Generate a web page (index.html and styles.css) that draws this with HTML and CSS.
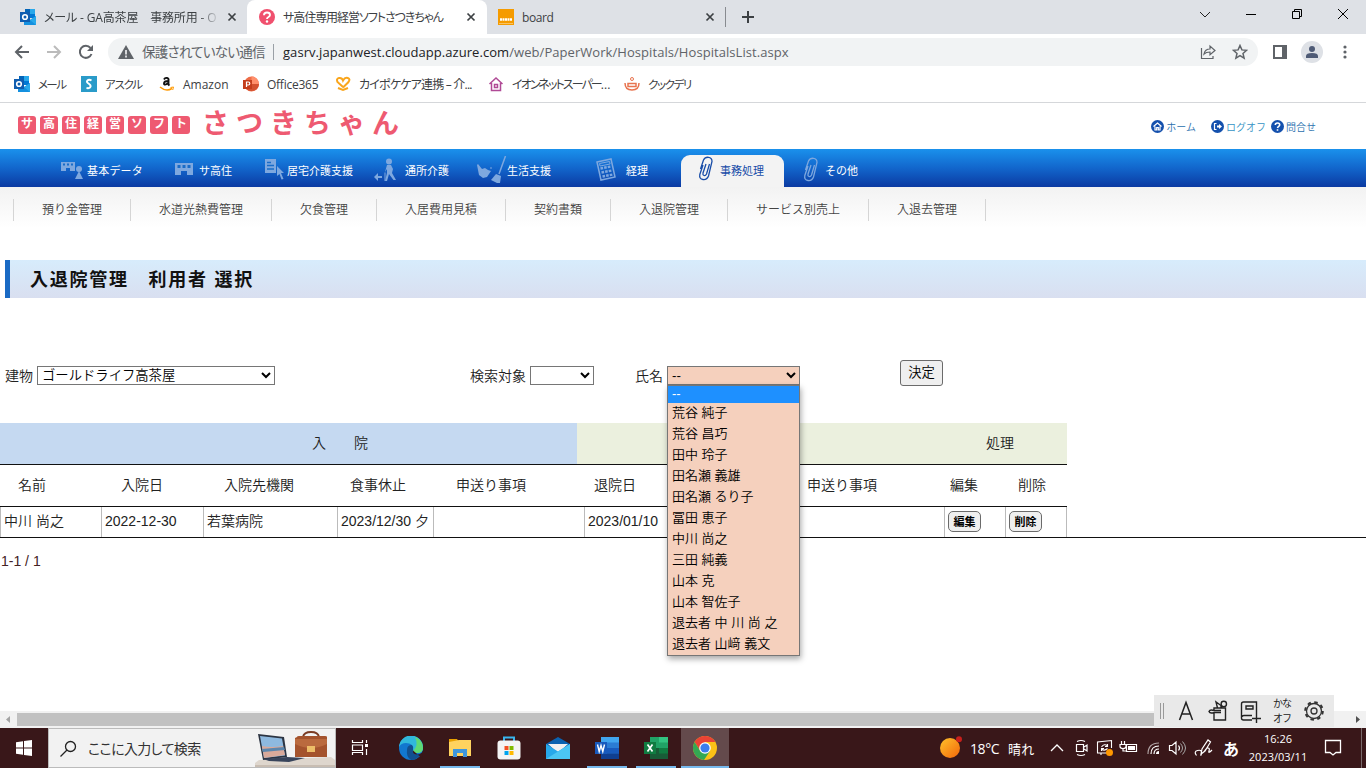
FILE: index.html
```html
<!doctype html>
<html lang="ja">
<head>
    <meta charset="UTF-8">
    <title>サ高住専用経営ソフトさつきちゃん</title>
    <link rel="stylesheet" href="styles.css">
</head>
<body>
<!-- icons used more than once -->
<svg class="defs">
    <symbol id="outlook" viewBox="0 0 16 16">
        <path d="M5 0h10v9H5z" fill="#28a8ea"/><path d="M5 0h5v5H5z" fill="#0364b8"/><path d="M10 5h5v4h-5z" fill="#0078d4"/>
        <path d="M4 8l6 3 6-4v9H4z" fill="#1490df"/><path d="M10 11l6-4v9z" fill="#28a8ea"/>
        <path d="M0 3h10v10H0z" fill="#0f5db0"/><circle cx="5" cy="8" r="2.300" fill="none" stroke="#fff" stroke-width="1.600"/>
    </symbol>
    <symbol id="close" viewBox="0 0 10 10"><path d="M1.500 1.500l7 7m0-7l-7 7" stroke="#3c4043" stroke-width="1.700"/></symbol>
    <symbol id="clip" viewBox="0 0 16 25">
        <path d="M2.500 13L5.500 4Q7 1 10.500 1.300T14 5.500L10.500 20Q9 24 5 23.500T1.800 18.500L5 9M11.500 8L8.500 18Q7.500 20 6 19.500T5 17L8 8" fill="none" stroke="currentColor" stroke-width="1.300"/>
    </symbol>
</svg>

<div class="tabs">
    <div class="tab tab1">
        <svg class="ico"><use href="#outlook"/></svg>
        <span class="name fade">メール - GA高茶屋　事務所用 - O</span>
        <svg class="x"><use href="#close"/></svg>
    </div>
    <div class="tab tab2 on">
        <svg class="ico" viewBox="0 0 16 16"><circle cx="8" cy="8" r="8" fill="#f0506e"/><path d="M5 6.200Q5 3.500 8 3.500T11 6q0 1.200-1.500 2T8 10" fill="none" stroke="#fff" stroke-width="1.900"/><circle cx="8" cy="12.500" r="1.200" fill="#fff"/></svg>
        <span class="name">サ高住専用経営ソフトさつきちゃん</span>
        <svg class="x"><use href="#close"/></svg>
    </div>
    <div class="tab tab3">
        <svg class="ico" viewBox="0 0 16 16"><path d="M0 0h16v16H0z" fill="#f59b00"/><path d="M2 10.500h12" stroke="#fff" stroke-width="2.500" stroke-dasharray="2 .5"/><path d="M1 14.500h14" stroke="#fbd48c" stroke-width=".7"/></svg>
        <span class="name">board</span>
        <svg class="x"><use href="#close"/></svg>
    </div>
    <svg class="plus" viewBox="0 0 12 12"><path d="M6 0v12M0 6h12" stroke="#3c4043" stroke-width="2"/></svg>
    <div class="win">
        <svg viewBox="0 0 46 28"><path d="M18 12l5 5 5-5" fill="none" stroke="#222"/></svg>
        <svg viewBox="0 0 46 28"><path d="M18 14.500h10" stroke="#000"/></svg>
        <svg viewBox="0 0 46 28"><path d="M18.500 11.500h7v7h-7zM20.500 11v-1.500h7v7H26" fill="none" stroke="#000"/></svg>
        <svg viewBox="0 0 46 28"><path d="M18 9l10 10m0-10L18 19" stroke="#000"/></svg>
    </div>
</div>

<div class="toolbar">
    <div class="arrows">
        <svg viewBox="0 0 16 16"><path d="M15 8H2m6-6L2 8l6 6" fill="none" stroke="#5f6368" stroke-width="2"/></svg>
        <svg viewBox="0 0 16 16"><path d="M1 8h13M8 2l6 6-6 6" fill="none" stroke="#bbb" stroke-width="2"/></svg>
        <svg viewBox="0 0 16 16"><path d="M13.500 10A6 6 0 1 1 12.500 4" fill="none" stroke="#5f6368" stroke-width="2"/><path d="M15 1v6H9z" fill="#5f6368"/></svg>
    </div>
    <div class="omnibox">
        <svg class="warn" viewBox="0 0 16 14"><path d="M8 0l8 14H0z" fill="#5f6368"/><path d="M8 5v4.500m0 1v2" stroke="#fff" stroke-width="1.500"/></svg>
        <span class="insecure">保護されていない通信</span>
        <i class="bar"></i>
        <span class="url"><b>gasrv.japanwest.cloudapp.azure.com</b>/web/PaperWork/Hospitals/HospitalsList.aspx</span>
        <svg class="share" viewBox="0 0 16 16"><path d="M1.500 4v10.500H13V12" fill="none" stroke="#5f6368" stroke-width="1.200"/><path d="M4 10q1-5 6-5V2l5 4.500-5 4.300V8Q6 8 4 10z" fill="none" stroke="#5f6368" stroke-width="1.200"/></svg>
        <svg class="star" viewBox="0 0 16 16"><path d="M8 1.500l1.900 4.400 4.700.4-3.600 3.100 1.100 4.700L8 11.600l-4.100 2.500L5 9.400 1.400 6.300l4.700-.4z" fill="none" stroke="#5f6368" stroke-width="1.500"/></svg>
    </div>
    <svg class="side" viewBox="0 0 14 14"><path d="M1 1h12v12H1z" fill="#fff" stroke="#5f6368" stroke-width="2"/><path d="M9 1h4v12H9z" fill="#5f6368"/></svg>
    <svg class="user" viewBox="0 0 22 22"><circle cx="11" cy="11" r="11" fill="#dee1e6"/><circle cx="11" cy="8" r="3" fill="#4f5b76"/><path d="M5 17v-2q0-3 6-3t6 3v2z" fill="#4f5b76"/></svg>
    <svg class="dots" viewBox="0 0 4 14"><g fill="#5f6368"><circle cx="2" cy="2" r="1.600"/><circle cx="2" cy="7" r="1.600"/><circle cx="2" cy="12" r="1.600"/></g></svg>
</div>

<div class="bookmarks">
    <div><svg><use href="#outlook"/></svg><span class="mail">メール</span></div>
    <div><svg viewBox="0 0 16 16"><path d="M0 0h16v16H0z" fill="#2a9bc9"/><path d="M10.500 4.500Q8 3 6.500 4.500t1 3 2 3.300T5.500 12" fill="none" stroke="#fff" stroke-width="2"/></svg><span class="askul">アスクル</span></div>
    <div><svg viewBox="0 0 16 16"><path d="M1 11q6 5 12 1.500" fill="none" stroke="#f90" stroke-width="1.500"/><path d="M11.500 11.500l3-.5-.8 3" fill="none" stroke="#f90"/><path d="M5 3.500Q6 1.500 8 2t1.500 2v4.500l1 1M9.500 5Q5 5 5 7.500T9.500 7" fill="none" stroke="#111" stroke-width="1.900"/></svg><span>Amazon</span></div>
    <div><svg viewBox="0 0 16 16"><circle cx="8.500" cy="8" r="7.500" fill="#ed6c47"/><path d="M8.500.5a7.500 7.500 0 0 1 7.500 7.500H8.500z" fill="#ff8f6b"/><path d="M1.200 8H16a7.500 7.500 0 0 1-14.500 2z" fill="#d35230"/><path d="M0 4h9v9H0z" fill="#c43e1c"/><path d="M3.500 11V6h1.800q1.500 0 1.500 1.500T5.300 9H3.500" fill="none" stroke="#fff" stroke-width="1.200"/></svg><span class="office">Office365</span></div>
    <div><svg viewBox="0 0 16 16"><path d="M8 11L2.500 6Q1 2.500 4 2t4 2.500Q10 1 12.800 2t.7 4L8 11.500M3 12l5 2 5-2" fill="none" stroke="#f9a51b" stroke-width="2"/></svg><span class="kp">カイポケケア連携 – 介...</span></div>
    <div><svg viewBox="0 0 16 16"><path d="M1.500 8L8 2l6.500 6M3.500 7v7.500h9V7M6.500 8.500h3v3h-3z" fill="none" stroke="#b04a96" stroke-width="1.500"/></svg><span><span class="aeon">イオンネットスーパー</span>...</span></div>
    <div><svg viewBox="0 0 16 16"><g fill="none" stroke="#e8744f"><circle cx="8" cy="3" r="1.500"/><path d="M1 7q0 7 7 7t7-7" stroke-width="1.500"/><path d="M4 7.500h8v3H4z" stroke-width="1.500"/></g></svg><span class="cook">クックデリ</span></div>
</div>

<div class="page">
    <div class="header">
        <div class="logo">
            <i>サ</i><i>高</i><i>住</i><i>経</i><i>営</i><i>ソ</i><i>フ</i><i>ト</i>
            <strong>さつきちゃん</strong>
        </div>
        <div class="links">
            <a class="home"><svg viewBox="0 0 13 13"><circle cx="6.500" cy="6.500" r="6.500" fill="#1450ad"/><path d="M2.500 6.500l4-3.500 4 3.500M4 6.500V10h1.700V7.500h1.600V10H9V6.500" fill="none" stroke="#fff" stroke-width="1.200"/></svg>ホーム</a>
            <a class="logoff"><svg viewBox="0 0 13 13"><circle cx="6.500" cy="6.500" r="6.500" fill="#1450ad"/><path d="M5.500 3.500H3.500v6h2" fill="none" stroke="#fff" stroke-width="1.200"/><path d="M6 5.500h2V4l3 2.500L8 9V7.500H6z" fill="#fff"/></svg>ログオフ</a>
            <a><svg viewBox="0 0 13 13"><circle cx="6.500" cy="6.500" r="6.500" fill="#1450ad"/><path d="M4.300 5q0-2 2.200-2t2.200 1.800q0 .8-1 1.500T6.500 8M6.500 9.200v1.600" fill="none" stroke="#fff" stroke-width="1.600"/></svg>問合せ</a>
        </div>
    </div>

    <div class="nav">
        <div class="n1"><svg viewBox="0 0 24 25"><path d="M0 5h14v9H9v-3H5v3H0z"/><path d="M2 7.500h10" stroke="#196cc8" stroke-width="2" stroke-dasharray="2"/><circle cx="18" cy="12" r="3"/><path d="M18 14l4 8h-8z"/></svg>基本データ</div>
        <div class="n2"><svg viewBox="0 0 24 25"><path d="M0 6h18v12h-6v-4H6v4H0z"/><path d="M2.500 9.500h13" stroke="#196cc8" stroke-width="3" stroke-dasharray="3 2"/></svg>サ高住</div>
        <div class="n3"><svg viewBox="0 0 22 25"><path d="M0 2h11v14H0z"/><path d="M2 5.500h4M2 8.500h7M2 12h7" stroke="#196cc8" stroke-width="1.300"/><path d="M12 9l7 7h-3l2.500 6-2 .5-2-5.500-2.500 2z"/></svg>居宅介護支援</div>
        <div class="n4"><svg viewBox="0 0 24 25"><circle cx="15" cy="4.500" r="3"/><path d="M13 8h4l2 4-1 4 4 7h-2.500L15 17l-2 7h-2l2-8v-4l-2 3z"/><path d="M11 15.500V24" stroke="#7ea8df"/><path d="M0 20l4-4v3h4v2H4v3z"/></svg>通所介護</div>
        <div class="n5"><svg viewBox="0 0 31 28"><path d="M1 9l1-1 4 5 3-1 3 2 3 1-4 6-4 1-4-3-1-5z"/><path d="M29.500 0L23 18" stroke="#7ea8df" stroke-width="1.500"/><path d="M20 18l5 2-1 7h-3l-6-3z"/><path d="M14 12h2" stroke="#7ea8df"/></svg>生活支援</div>
        <div class="n6"><svg viewBox="0 0 24 25"><path d="M1 5l14-3 4 18-14 3z" fill="none" stroke="#7ea8df" stroke-width="1.500"/><path d="M3.500 6.500l10-2 .6 2.500-10 2z" fill="none" stroke="#7ea8df"/><path d="M4.500 11.500l10.500-2M5.500 15.500l10.500-2M6.500 19.500l10.500-2" stroke="#7ea8df" stroke-width="2.500" stroke-dasharray="2.600 1.100"/></svg>経理</div>
        <div class="n7"><svg><use href="#clip"/></svg>事務処理</div>
        <div class="n8"><svg><use href="#clip"/></svg>その他</div>
    </div>

    <div class="subnav">
        <a>預り金管理</a><a>水道光熱費管理</a><a>欠食管理</a><a>入居費用見積</a><a>契約書類</a><a>入退院管理</a><a>サービス別売上</a><a>入退去管理</a>
    </div>

    <h1>入退院管理　利用者 選択</h1>

    <div class="filter">
        <label class="f1"><span>建物</span> <select><option>ゴールドライフ高茶屋</option></select></label>
        <label class="f2"><span>検索対象</span> <select><option></option></select></label>
        <label class="f3"><span>氏名</span>
            <div class="pick">
                <select><option>--</option></select>
                <ul class="list">
                    <li class="cur">--</li>
                    <li>荒谷 純子</li>
                    <li>荒谷 昌巧</li>
                    <li>田中 玲子</li>
                    <li>田名瀬 義雄</li>
                    <li>田名瀬 るり子</li>
                    <li>冨田 恵子</li>
                    <li>中川 尚之</li>
                    <li>三田 純義</li>
                    <li>山本 克</li>
                    <li>山本 智佐子</li>
                    <li>退去者 中 川 尚 之</li>
                    <li>退去者 山﨑 義文</li>
                </ul>
            </div>
        </label>
        <button>決定</button>
    </div>

    <div class="group">
        <div class="in">入　　院</div>
        <div class="out">処理</div>
    </div>
    <div class="head">
        <span>名前</span><span>入院日</span><span>入院先機関</span><span>食事休止</span><span>申送り事項</span><span>退院日</span><span>申送り事項</span><span>編集</span><span>削除</span>
    </div>
    <div class="row">
        <span>中川 尚之</span><span>2022-12-30</span><span>若葉病院</span><span>2023/12/30 夕</span><span></span><span>2023/01/10</span><span></span><span><button>編集</button></span><span><button>削除</button></span><span></span>
    </div>
    <p class="pager">1-1 / 1</p>
</div>

<div class="scroll">
    <svg viewBox="0 0 17 17"><path d="M10 5v7L6 8.500z" fill="#a3a3a3"/></svg>
    <i></i>
    <svg viewBox="0 0 17 17"><path d="M7 5v7l4-3.500z" fill="#505050"/></svg>
</div>

<div class="ime">
    <svg class="grip" viewBox="0 0 16 32"><path d="M6.500 8v16M9.500 8v16" stroke="#999"/></svg>
    <svg viewBox="0 0 32 32"><path d="M9.500 25L16 7.500 22.500 25M12 19h8" fill="none" stroke="#222" stroke-width="1.500"/></svg>
    <svg viewBox="0 0 32 32"><path d="M12 18v7h11.500V13H12v2M12 17.500h7M12 15.500h7M12 15.500q-4-1.500-5 1 1 2.500 5 1M15.500 13L14 7l5 3.500V13M18.500 13l2-2" fill="none" stroke="#222" stroke-width="1.400"/><circle cx="21.800" cy="9" r="2.700" fill="none" stroke="#222" stroke-width="1.400"/></svg>
    <svg viewBox="0 0 32 32"><path d="M22.500 19V7h-13q-2 0-2 2v14q0 2 2 2H18M8 22q0-1.500 2-1.500h8M12 11h7v3h-7zM22.500 19v9m-4.500-4.500h9" fill="none" stroke="#222" stroke-width="1.400"/></svg>
    <span>かな<br>オフ</span>
    <svg viewBox="0 0 32 32"><circle cx="16" cy="16" r="7.500" fill="none" stroke="#333" stroke-width="1.300"/><circle cx="16" cy="16" r="8.800" fill="none" stroke="#333" stroke-width="2" stroke-dasharray="3.455"/><circle cx="16" cy="16" r="3" fill="none" stroke="#333" stroke-width="1.300"/></svg>
</div>

<div class="taskbar">
    <div class="start"><svg viewBox="0 0 16 16"><path d="M0 2.300L7 1.200v6.300H0zM8 1l8-1v7.500H8zM0 8.500h7v6.300l-7-1zM8 8.500h8V16l-8-1z" fill="#fff"/></svg></div>
    <div class="search">
        <svg class="lens" viewBox="0 0 17 17"><circle cx="10.500" cy="6.500" r="5" fill="none" stroke="#222" stroke-width="1.300"/><path d="M7 10l-6.500 6.500" stroke="#222" stroke-width="1.300"/></svg>
        <span>ここに入力して検索</span>
        <svg class="art" viewBox="0 0 80 38"><path d="M4 31l72-3 4 3v7H0v-4z" fill="#ded6cd"/><path d="M0 36h80v2H0z" fill="#c8bdb2"/><path d="M3 5l26 3 3 20-24 3z" fill="#2c3442"/><path d="M5 7l22 2.500 3 17-21 2.500z" fill="#8eb9df"/><path d="M7 17q9 2 21 0l2 9-21 3z" fill="#d9a99a"/><path d="M7 20l22-2 1 3-22 2z" fill="#5b86ad"/><path d="M8 30l24-2 18 1-16 4-20-1z" fill="#38445b"/><path d="M48 8q1-5 8-5t8 5" fill="none" stroke="#7b3b22" stroke-width="2"/><path d="M42 8q0-1 2-1h26q2 0 2 1v20H40V9z" fill="#a4532d"/><path d="M40 10h32v5q-16 8-32 0z" fill="#ba6a3e"/><path d="M52 17h8v6h-8z" fill="#edbd68"/></svg>
    </div>
    <div class="apps">
        <div><svg viewBox="0 0 24 24"><path d="M2.500 4v2.500h10V4M2.500 19v-2.500h10V19M2.500 9h10v5.500h-10zM16.500 4v3m0 6v6" fill="none" stroke="#fff" stroke-width="1.200"/><path d="M15 8h3v3h-3z" fill="#fff"/></svg></div>
        <div><svg viewBox="0 0 24 24"><circle cx="12" cy="12" r="12" fill="#1277cf"/><path d="M0 11A12 12 0 0 1 24 12q0 5-6 5-4 0-4-2 1-8-7-8-5 0-7 4z" fill="#31b8dc"/><path d="M16 1a12 12 0 0 1 8 11q0 5-6 5-4 0-4-2 6-6 2-14z" fill="#5fda74"/><path d="M8 14q0-5 5-5 2 2 1 5 0 5 8 4-4 6-10 6-5-3-4-10z" fill="#12508f"/><path d="M14 14.500Q13 19 20 18.500l3-2v-2l1 3-1 2 1 4-3-3z" fill="#391719"/></svg></div>
        <div class="run"><svg viewBox="0 0 24 24"><path d="M1 3h8l2 3H1z" fill="#e9a100"/><path d="M1 6l10-2h12v16H1z" fill="#ffd35f"/><path d="M5 21v-8h14v8h-4v-4H9v4z" fill="#3f96dc"/></svg></div>
        <div><svg viewBox="0 0 24 24"><path d="M7 6V1.500h10V6" fill="none" stroke="#39b5ee" stroke-width="2"/><rect x=".5" y="4.500" width="23" height="19" rx="3" fill="#f4f4f4"/><path d="M7.500 10h4v4h-4z" fill="#f25022"/><path d="M12.500 10h4v4h-4z" fill="#7fba00"/><path d="M7.500 15h4v4h-4z" fill="#00a4ef"/><path d="M12.500 15h4v4h-4z" fill="#ffb900"/></svg></div>
        <div><svg viewBox="0 0 24 24"><path d="M0 8l12-7 12 7v6H0z" fill="#0b62b0"/><path d="M2 8h20l-10 9z" fill="#f1f1f1"/><path d="M0 8l12 7.500L24 8v15H0z" fill="#27a8ea"/><path d="M24 8v15H0z" fill="#4bc5f3"/></svg></div>
        <div class="run"><svg viewBox="0 0 24 24"><path d="M6 1h18v22H6z" fill="#2b7cd3"/><path d="M6 1h18v5.500H6z" fill="#41a5ee"/><path d="M6 12h18v5.500H6z" fill="#185abd"/><path d="M6 17.500h18V23H6z" fill="#103f91"/><path d="M0 6h12v12H0z" fill="#185abd"/><path d="M2.500 8.500l1.700 7L6 9.500l1.800 6 1.700-7" fill="none" stroke="#fff" stroke-width="1.400"/></svg></div>
        <div class="run"><svg viewBox="0 0 24 24"><path d="M6 1h18v22H6z" fill="#21a366"/><path d="M15 1h9v5.500h-9z" fill="#33c481"/><path d="M6 12h18v11H6z" fill="#185c37"/><path d="M15 12h9v5.500h-9z" fill="#107c41"/><path d="M0 6h12v12H0z" fill="#107c41"/><path d="M3.500 8.500l5 7m0-7l-5 7" stroke="#fff" stroke-width="1.700"/></svg></div>
        <div class="run on"><svg viewBox="0 0 24 24"><circle cx="12" cy="12" r="12" fill="#fbc116"/><path d="M1.600 6A12 12 0 0 1 22.400 6H12L8 16z" fill="#ea4335"/><path d="M1.600 6A12 12 0 0 0 11 24l6-9-9 1z" fill="#34a853"/><circle cx="12" cy="12" r="5.800" fill="#fff"/><circle cx="12" cy="12" r="4.600" fill="#3b7ded"/></svg></div>
    </div>
    <div class="tray">
        <svg viewBox="0 0 24 24"><defs><linearGradient id="sun" x1="0" y1="0" x2="1" y2="1"><stop offset="0" stop-color="#ffc22b"/><stop offset="1" stop-color="#f3660a"/></linearGradient></defs><circle cx="12" cy="12" r="10" fill="url(#sun)"/><circle cx="21" cy="3.300" r="3" fill="#c8201c"/></svg>
        <span class="temp">18°C</span><span class="sky">晴れ</span>
        <svg viewBox="0 0 24 24"><path d="M6 15l6-6 6 6" fill="none" stroke="#fff" stroke-width="1.300"/></svg>
        <svg viewBox="0 0 24 24"><path d="M7.500 8.500h7v7h-7zM15 11l3-2v6l-3-2M8 5.500q4-2 8 0M8 18.500q4 2 8 0" fill="none" stroke="#fff" stroke-width="1.200"/></svg>
        <svg viewBox="0 0 24 24"><path d="M14 17H4.500V6l14-1.500V12M8 17v2M8.500 11q3-4 6-1m0-2v2.500H12M14.500 12.500q-3 3-6 .5m0 2v-2.500H11" fill="none" stroke="#fff" stroke-width="1.100"/><circle cx="16.500" cy="16.500" r="3.500" fill="#ff9800"/></svg>
        <svg viewBox="0 0 24 24"><path d="M9.500 8.500h10v7h-10zM4.500 5v3m3-3v3M3 8.500h6v2q0 2-3 2t-3-2zM6 12v3h3" fill="none" stroke="#fff" stroke-width="1.200"/><path d="M11 10h7v4h-7z" fill="#fff"/></svg>
        <svg viewBox="0 0 24 24"><g fill="none" stroke="#fff" stroke-width="1.200"><path d="M7 18Q7 7 18 7" opacity=".6"/><path d="M10 18q0-8 8-8M13 18q0-5 5-5"/></g><path d="M15 18q0-3 3-3v3z" fill="#fff"/></svg>
        <svg viewBox="0 0 24 24"><path d="M4.500 9.500H7L11 6v12l-4-3.500H4.500zM13.500 9.500q2 2.500 0 5" fill="none" stroke="#fff" stroke-width="1.200"/><path d="M15.500 7.500q4 4.500 0 9M17.500 5.500q6 6.500 0 13" fill="none" stroke="#aaa"/></svg>
        <svg class="pen" viewBox="0 0 24 24"><path d="M9 18l1-5 6-9 2.500 2-5.500 9zM4.500 19.500q-3-4 1-5t4 2-1 3M12 16q2-4 4-4t1 3 3-1" fill="none" stroke="#fff" stroke-width="1.200"/></svg>
        <span class="mode">あ</span>
        <span class="clock">16:26<br>2023/03/11</span>
        <svg class="note" viewBox="0 0 24 24"><path d="M4.500 4.500h15v12H15L12 19l-3-2.500H4.500z" fill="none" stroke="#fff" stroke-width="1.300"/></svg>
    </div>
</div>
</body>
</html>
```
FILE: styles.css
```css
* {
    margin: 0;
    padding: 0;
    box-sizing: border-box;
}

body {
    width: 1366px;
    height: 768px;
    overflow: hidden;
    position: relative;
    display: flex;
    flex-direction: column;
    background: #fff;
    color: #222;
    font: 14px "Liberation Sans", "Noto Sans CJK JP", sans-serif;
    white-space: nowrap;
}

svg {
    display: block;
    flex: none;
}

i {
    font-style: normal;
}

.defs {
    position: absolute;
    width: 0;
    height: 0;
}

/* browser */
.tabs, .toolbar, .bookmarks, .taskbar {
    font-family: "Open Sans", "Noto Sans CJK JP", sans-serif;
    font-feature-settings: "palt";
}

.tabs {
    height: 34px;
    background: #dee1e6;
    display: flex;
    font-size: 12px;
    color: #3c4043;
}

.tab {
    display: flex;
    align-items: center;
    height: 34px;
}

.tab1 {
    width: 247px;
    padding: 0 10px 0 20px;
}

.tab2 {
    width: 240px;
    padding: 0 11px 0 12px;
}

.tab3 {
    width: 239px;
    padding: 0 11px 0 11px;
    position: relative;
}

.tab3::after {
    content: "";
    width: 1px;
    height: 20px;
    background: #888b90;
    position: absolute;
    right: 0;
    top: 7px;
}

.tab.on {
    background: #fff;
    border-radius: 8px 8px 0 0;
}

.tab .ico {
    width: 16px;
    height: 16px;
    margin-right: 8px;
}

.tab .name {
    flex: 1;
}

.tab1 .name {
    letter-spacing: -.15px;
    margin-right: 7px;
}

.tab2 .name {
    letter-spacing: -1.050px;
}

.tab3 .name {
    letter-spacing: -.4px;
}

.fade {
    -webkit-mask-image: linear-gradient(90deg, #000 88%, transparent);
    mask-image: linear-gradient(90deg, #000 88%, transparent);
}

.tab .x {
    width: 10px;
    height: 10px;
}

.plus {
    width: 12px;
    height: 12px;
    margin: 11px 0 0 16px;
}

.win {
    display: flex;
    margin-left: auto;
}

.win svg {
    width: 46px;
    height: 28px;
}

.toolbar {
    height: 35px;
    display: flex;
    align-items: center;
}

.arrows {
    display: flex;
    gap: 16px;
    padding-left: 14px;
    width: 108px;
}

.arrows svg {
    width: 16px;
    height: 16px;
}

.omnibox {
    width: 1150px;
    height: 28px;
    border-radius: 14px;
    background: #f1f3f4;
    display: flex;
    align-items: center;
    padding: 0 10px;
    color: #5f6368;
}

.warn {
    width: 16px;
    height: 14px;
    margin-right: 8px;
}

.insecure {
    width: 122px;
    font-size: 13.500px;
    letter-spacing: -.75px;
    padding-bottom: 2px;
}

.bar {
    width: 1px;
    height: 16px;
    margin: 0 9px 0 9px;
    background: #9aa0a6;
}

.url {
    flex: 1;
    font-size: 13px;
    letter-spacing: .06px;
}

.url b {
    color: #202124;
    font-weight: 400;
}

.share {
    width: 16px;
    height: 16px;
    margin-right: 16px;
}

.star {
    width: 16px;
    height: 16px;
}

.side {
    width: 14px;
    height: 14px;
    margin-left: 15px;
}

.user {
    width: 22px;
    height: 22px;
    margin-left: 14px;
}

.dots {
    width: 4px;
    height: 14px;
    margin-left: 20px;
}

.bookmarks {
    height: 34px;
    border-bottom: 1px solid #d5d7da;
    padding: 0 0 3px 14px;
    display: grid;
    grid-template-columns: 67px 78px 84px 92px 153px 136px 1fr;
    font-size: 12px;
    color: #3c4043;
}

.bookmarks div {
    display: flex;
    align-items: center;
    gap: 8px;
}

.bookmarks svg {
    width: 16px;
    height: 16px;
}

.mail, .askul, .cook {
    font-size: 11.500px;
    letter-spacing: -1.600px;
}

.askul {
    letter-spacing: -1.200px;
}

.cook {
    letter-spacing: -1.400px;
}

.office {
    letter-spacing: -.25px;
}

.kp {
    letter-spacing: -.8px;
}

.aeon {
    letter-spacing: -1.900px;
}

/* page */
.page {
    height: 608px;
    font-weight: 350;
}

.header {
    height: 46px;
    display: flex;
    justify-content: space-between;
    padding: 0 50px 0 18px;
}

.logo {
    display: flex;
    gap: 4px;
    padding-top: 13px;
}

.logo i {
    width: 18px;
    height: 18px;
    border-radius: 3px;
    background: #ee5a71;
    color: #fff;
    font-size: 12px;
    font-weight: bold;
    line-height: 17px;
    text-align: center;
}

.logo strong {
    margin: -7px 0 0 8px;
    font-size: 27px;
    font-weight: 700;
    line-height: 31px;
    letter-spacing: 7px;
    color: #ee5a71;
}

.links {
    display: flex;
    align-items: center;
    height: 46px;
    font-size: 10px;
    color: #2a6fae;
}

.links a {
    display: flex;
    align-items: center;
    gap: 2px;
}

.links svg {
    width: 13px;
    height: 13px;
}

.links .home {
    margin-right: 15px;
}

.links .logoff {
    margin-right: 5px;
    color: #3593c4;
}

.nav {
    height: 38px;
    background: linear-gradient(#1a91ec, #1266cc 50%, #0b3aa2);
    display: flex;
    padding-left: 61px;
    color: #fff;
    font-size: 11px;
    font-weight: 400;
}

.nav div {
    display: flex;
    align-items: center;
    padding-top: 4px;
}

.nav svg {
    width: 24px;
    height: 25px;
    margin-top: -1px;
    fill: #7ea8df;
    color: #7ea8df;
}

.n1 {
    width: 114px;
    gap: 2px;
    letter-spacing: .2px;
}

.n2 {
    width: 90px;
}

.nav .n3 svg {
    width: 22px;
}

.n3 {
    width: 109px;
}

.n4 {
    width: 102px;
    gap: 7px;
}

.nav .n5 svg {
    width: 31px;
    height: 28px;
}

.n5 {
    width: 120px;
}

.n6 {
    width: 85px;
    gap: 6px;
}

.nav .n7 svg, .nav .n8 svg {
    width: 16px;
}

.nav .n7 {
    width: 103px;
    margin-top: 6px;
    padding: 0 0 2px 17px;
    gap: 6px;
    border-radius: 9px 9px 0 0;
    background: #f3f3f3;
    color: #174ca8;
}

.nav .n7 svg {
    margin-top: -3px;
    color: #174ca8;
}

.n8 {
    margin-left: 19px;
    gap: 6px;
}

.subnav {
    height: 41px;
    padding: 12px 0 0 13px;
    display: flex;
    background: linear-gradient(#f2f2f2, #fff);
    font-size: 12px;
    color: #444;
}

.subnav a {
    height: 22px;
    line-height: 23px;
    padding: 0 28px;
    border-left: 1px solid #d5d5d5;
}

.subnav a:last-child {
    border-right: 1px solid #d5d5d5;
}

h1 {
    margin: 32px 0 0 5px;
    height: 38px;
    padding-left: 20px;
    border-left: 5px solid #1a6ac4;
    background: linear-gradient(#d7ecfc, #d9dff0);
    font-size: 18px;
    line-height: 40px;
    letter-spacing: 1.750px;
    color: #111;
}

.filter {
    height: 125px;
    padding: 62px 0 0 5px;
    display: flex;
}

.filter label {
    display: flex;
    align-items: center;
    gap: 4px;
    height: 31px;
}

.filter label > span {
    padding-bottom: 2px;
}

.filter select {
    display: block;
    height: 19px;
    border: 1px solid #767676;
    border-radius: 0;
    background-color: #fff;
    color: #000;
    font: 350 13.333px "Liberation Sans", "Noto Sans CJK JP", sans-serif;
}

.f1 {
    width: 465px;
}

.f1 select {
    width: 238px;
}

.f2 {
    width: 165px;
}

.f2 select {
    width: 64px;
}

.f3 {
    width: 265px;
}

.pick {
    position: relative;
}

.filter .pick select {
    width: 133px;
    background-color: #f5d0bd;
}

/* open list lies over the table */
.list {
    position: absolute;
    left: 0;
    top: 19px;
    width: 133px;
    border: 1px solid #767676;
    background: #f5d0bd;
    box-shadow: 1px 3px 6px rgba(0, 0, 0, .35);
    list-style: none;
    font-size: 13px;
    color: #000;
    z-index: 2;
}

.list li {
    height: 21px;
    line-height: 19px;
    padding-left: 4px;
}

.list li.cur {
    height: 17px;
    line-height: 16px;
    background: #1e90ff;
    color: #fff;
}

button {
    border: 1px solid #6b6b6b;
    border-radius: 3px;
    background: #efefef;
    color: #000;
    font: 350 13.333px "Noto Sans CJK JP", sans-serif;
}

.filter button {
    width: 43px;
    height: 26px;
    line-height: 20px;
    padding-bottom: 2px;
}

.group, .head {
    width: 1067px;
    display: flex;
    border-bottom: 1px solid #111;
    height: 42px;
    line-height: 40px;
}

.in {
    width: 577px;
    padding-left: 312px;
    background: #c5d9f1;
}

.out {
    flex: 1;
    padding-left: 409px;
    background: #ebf0de;
}

.head {
    display: grid;
    grid-template-columns: 103px 103px 126px 106px 138px 213px 143px 68px 1fr;
    padding-left: 18px;
}

.row {
    height: 31px;
    border-bottom: 1px solid #111;
    display: grid;
    grid-template-columns: 101px 102px 134px 96px 151px 213px 147px 61px 61px 1fr;
    line-height: 29px;
}

.row span {
    border-left: 1px solid #bbb;
    padding-left: 3px;
}

.row span:nth-child(7) {
    border: 0;
}

.row button {
    display: block;
    width: 33px;
    height: 21px;
    margin-top: 4px;
    border-radius: 5px;
    font-size: 11px;
    font-weight: bold;
    line-height: 19px;
}

.pager {
    padding: 15px 0 0 1px;
    color: #422;
}

.scroll {
    height: 17px;
    background: #f1f1f1;
    display: flex;
}

.scroll svg {
    width: 17px;
    height: 17px;
}

.scroll i {
    width: 1317px;
    height: 13px;
    margin: 2px 15px 0 0;
    background: #c1c1c1;
}

/* floating input bar */
.ime {
    position: absolute;
    left: 1154px;
    top: 695px;
    width: 180px;
    height: 32px;
    display: flex;
    background: #e9e9e9;
    color: #222;
    z-index: 3;
}

.ime svg {
    width: 32px;
    height: 32px;
}

.ime .grip {
    width: 16px;
}

.ime span {
    width: 32px;
    text-align: center;
    font-size: 10px;
    line-height: 15px;
    padding-top: 1px;
    letter-spacing: -1px;
}

/* taskbar */
.taskbar {
    height: 40px;
    display: flex;
    background: #391719;
    color: #fff;
}

.start {
    width: 48px;
    padding: 12px 16px;
}

.start svg {
    width: 16px;
    height: 16px;
}

.search {
    width: 288px;
    border: 1px solid #bbb;
    background: #f2f2f2;
    color: #333;
    display: flex;
    align-items: center;
    padding-left: 11px;
}

.search span {
    width: 164px;
    margin-left: 11px;
    letter-spacing: -.6px;
}

.lens {
    width: 17px;
    height: 17px;
}

.art {
    width: 80px;
    height: 38px;
    margin-left: 4px;
}

.apps {
    display: flex;
    padding-left: 1px;
    margin-right: auto;
}

.apps div {
    width: 49px;
    height: 40px;
    padding: 8px 0 0 13px;
}

.apps svg {
    width: 24px;
    height: 24px;
}

.apps .run {
    background: linear-gradient(#76b9ed, #76b9ed) 5px 38px / 40px 2px no-repeat;
}

.apps .on {
    width: 48px;
    margin-left: 1px;
    padding-left: 12px;
    background: linear-gradient(#76b9ed, #76b9ed) 0 38px / 48px 2px no-repeat, #644a4c;
}

.tray {
    width: 428px;
    display: flex;
    align-items: center;
}

.tray svg {
    width: 24px;
    height: 24px;
}

.tray .temp {
    margin-left: 8px;
    width: 38px;
    letter-spacing: -.4px;
}

.tray .sky {
    width: 37px;
    font-size: 13px;
}

.tray .pen {
    width: 30px;
}

.mode {
    width: 24px;
    font-size: 16px;
    font-weight: bold;
    text-align: center;
}

.clock {
    width: 70px;
    text-align: center;
    font-size: 11px;
    line-height: 18px;
}

.tray .note {
    margin-left: 8px;
}

.tray::after {
    content: "";
    width: 1px;
    height: 40px;
    margin-left: 16px;
    background: #79696a;
}
```
